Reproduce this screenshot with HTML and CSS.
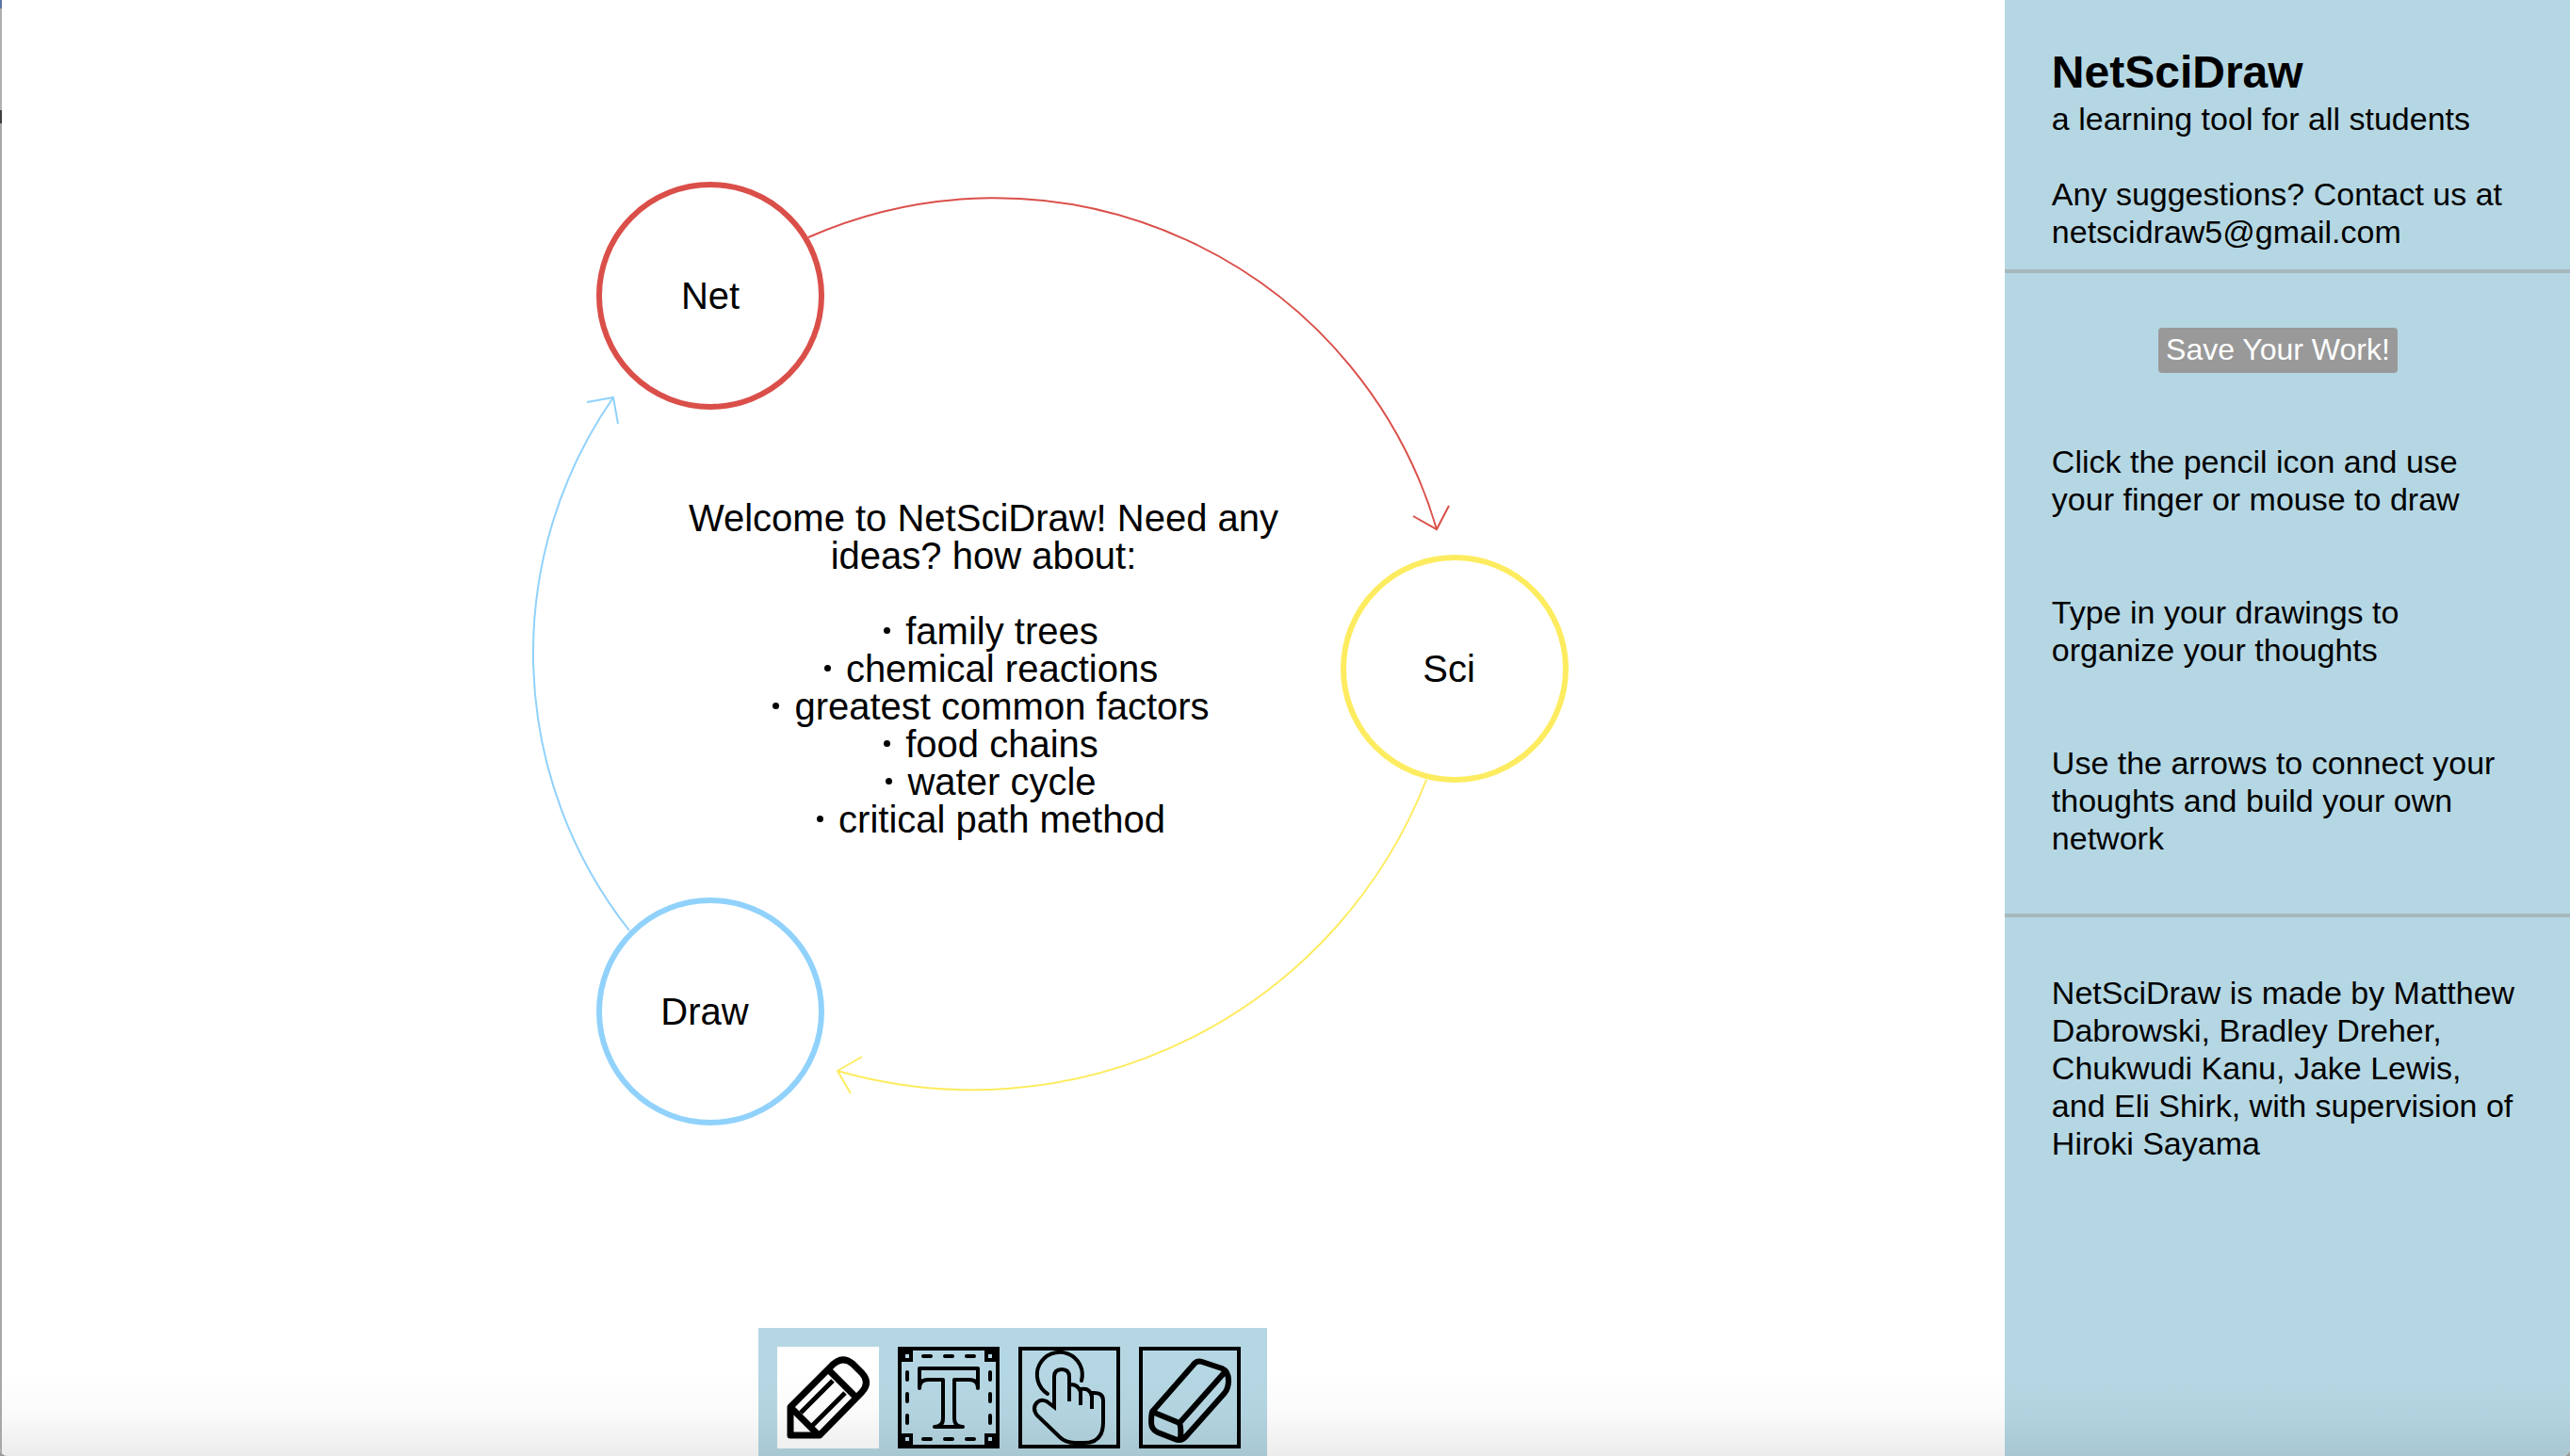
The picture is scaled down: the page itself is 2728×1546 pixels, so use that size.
FILE: index.html
```html
<!DOCTYPE html>
<html lang="en">
<head>
<meta charset="utf-8">
<title>NetSciDraw</title>
<link rel="stylesheet" href="styles.css">
</head>
<body>
<div class="app">
  <main class="workspace">
    <div class="board">
      <svg class="drawing" width="1700" height="1240" viewBox="0 0 1700 1240" role="img" aria-label="Net leads to Sci, Sci leads to Draw, Draw leads to Net">
        <g class="node net"><circle cx="754" cy="314" r="118"/></g>
        <g class="node sci"><circle cx="1544" cy="710" r="118"/></g>
        <g class="node draw"><circle cx="754" cy="1074" r="118"/></g>
        <g class="link net"><path d="M858 252A489 489 0 0 1 1525 562"/><path d="M1500 548L1525 562L1538 537"/></g>
        <g class="link sci"><path d="M1514 828A517 517 0 0 1 889 1137"/><path d="M915 1122L889 1137L903 1161"/></g>
        <g class="link draw"><path d="M668 988A476 476 0 0 1 651 422"/><path d="M623 427L651 422L656 450"/></g>
        <text class="label" x="754" y="328">Net</text>
        <text class="label" x="1538" y="724">Sci</text>
        <text class="label" x="748" y="1088">Draw</text>
      </svg>
      <div class="welcome">
        <p>Welcome to NetSciDraw! Need any ideas? how about:</p>
        <ul class="ideas">
          <li>family trees</li>
          <li>chemical reactions</li>
          <li>greatest common factors</li>
          <li>food chains</li>
          <li>water cycle</li>
          <li>critical path method</li>
        </ul>
      </div>
    </div>
    <div class="toolbar" role="toolbar" aria-label="Drawing tools">
      <button class="tool selected" type="button" aria-label="Pencil">
        <svg viewBox="0 0 108 108" fill="none" stroke="#000" stroke-width="7" stroke-linejoin="round">
          <path d="M14 64L56 22Q68 8 80 18L90 28Q99 38 90 48L45 94H14Z"/>
          <path d="M54 24L83 53M14 64L44 94"/>
          <path d="M59 36L25 70M72 49L37 84" stroke-width="5"/>
        </svg>
      </button>
      <button class="tool" type="button" aria-label="Text">
        <svg viewBox="0 0 108 108" fill="none" stroke="#000" stroke-width="4">
          <rect x="2" y="2" width="104" height="104"/>
          <path d="M6 6h8v8h-8zM94 6h8v8h-8zM6 94h8v8h-8zM94 94h8v8h-8z"/>
          <path d="M27 10h8M50 10h8M73 10h8M27 98h8M50 98h8M73 98h8M10 27v8M10 50v8M10 73v8M98 27v8M98 50v8M98 73v8" stroke-linecap="round"/>
          <path d="M23 44V23H85V44Q85 35 76 35H60V76Q60 85 69 85H39Q48 85 48 76V35H32Q23 35 23 44Z" stroke-linecap="round" stroke-linejoin="round"/>
        </svg>
      </button>
      <button class="tool" type="button" aria-label="Move">
        <svg viewBox="0 0 108 108" fill="none" stroke="#000" stroke-width="4">
          <rect x="2" y="2" width="104" height="104"/>
          <path d="M31 50A24 24 0 1 1 67 36" stroke-linecap="round"/>
          <path d="M54 58V32Q54 24 46 24Q38 24 38 32V64L30 58Q24 55 20 59Q14 65 20 73L44 96Q50 102 60 102H70Q90 102 90 80V57Q90 48 78 49V66V53Q76 43 66 45V62V48Q63 39 54 40"/>
        </svg>
      </button>
      <button class="tool" type="button" aria-label="Eraser">
        <svg viewBox="0 0 108 108" fill="none" stroke="#000" stroke-width="6" stroke-linejoin="round">
          <rect x="2" y="2" width="104" height="104" stroke-width="4" stroke-linejoin="miter"/>
          <path d="M14 69L57 20Q61 14 67 16L88 23Q95 26 95 36Q95 44 91 49L50 95Q45 101 38 98L20 91Q13 88 13 80Q13 73 14 69L43 81L91 27M43 81Q45 86 44 98"/>
        </svg>
      </button>
    </div>
  </main>
  <aside class="sidebar">
    <header class="panel intro">
      <h1>NetSciDraw</h1>
      <p>a learning tool for all students</p>
      <p class="contact">Any suggestions? Contact us at netscidraw5@gmail.com</p>
    </header>
    <section class="panel help">
      <button class="save" type="button">Save Your Work!</button>
      <p>Click the pencil icon and use your finger or mouse to draw</p>
      <p>Type in your drawings to organize your thoughts</p>
      <p>Use the arrows to connect your thoughts and build your own network</p>
    </section>
    <footer class="panel credits">
      <p>NetSciDraw is made by Matthew Dabrowski, Bradley Dreher, Chukwudi Kanu, Jake Lewis, and Eli Shirk, with supervision of Hiroki Sayama</p>
    </footer>
  </aside>
  <div class="shade"></div>
  <div class="edge"></div>
</div>
</body>
</html>
```
FILE: styles.css
```css
* {
  box-sizing: border-box;
}

body,
h1,
p,
ul {
  margin: 0;
  padding: 0;
}

body {
  background: #999;
  color: #000;
  font-family: "Liberation Sans", Arial, Helvetica, sans-serif;
  font-size: 34px;
  line-height: 40px;
}

button {
  font: inherit;
}

.app {
  position: relative;
  display: flex;
  min-height: 100vh;
  overflow: hidden;
  border-radius: 0 0 8px 8px;
  background: #fff;
}

.workspace {
  flex: 1;
  min-width: 0;
  display: flex;
  flex-direction: column;
}

/* The board is a free canvas: drawings and notes sit at their own coordinates. */
.board {
  position: relative;
  flex: 1;
}

.drawing {
  display: block;
}

.node {
  fill: none;
  stroke-width: 6px;
}

.link {
  fill: none;
  stroke-width: 2px;
}

.net {
  stroke: #da4f49;
}

.sci {
  stroke: #fdec60;
}

.draw {
  stroke: #90d2fb;
}

.label {
  font-size: 40px;
  text-anchor: middle;
}

.welcome {
  position: absolute;
  top: 530px;
  left: 714px;
  width: 660px;
  font-size: 40px;
  text-align: center;
}

.ideas {
  margin-top: 40px;
  list-style: none;
}

.ideas li::before {
  content: "";
  display: inline-block;
  width: 7px;
  height: 7px;
  margin: 0 16px;
  border-radius: 50%;
  background: #000;
  vertical-align: 11px;
}

.toolbar {
  align-self: center;
  display: flex;
  gap: 20px;
  margin-left: 22px;
  padding: 20px 28px 8px 20px;
  background: #b5d7e3;
}

.tool {
  width: 108px;
  height: 108px;
  padding: 0;
  border: 0;
  background: none;
}

.tool.selected {
  background: #fff;
}

.tool svg {
  display: block;
  width: 100%;
  height: 100%;
}

.sidebar {
  width: 22%;
  background: #b5d7e3;
}

.panel {
  padding: 0 50px;
}

.intro {
  padding-top: 52px;
  padding-bottom: 20px;
  border-bottom: 4px solid #a6b8be;
}

.intro h1 {
  margin-bottom: 4px;
  font-size: 48px;
  line-height: 50px;
}

.contact {
  margin-top: 40px;
}

.help {
  display: flex;
  flex-direction: column;
  padding-top: 58px;
  padding-bottom: 60px;
  border-bottom: 4px solid #a6b8be;
}

.help p + p {
  margin-top: 80px;
}

.save {
  align-self: center;
  height: 48px;
  margin-right: 20px;
  margin-bottom: 74px;
  padding: 0 8px 2px;
  border: 0;
  border-radius: 4px;
  background: #999;
  color: #fff;
  font-size: 32px;
}

.credits {
  padding-top: 60px;
}

/* Soft shadow along the bottom edge of the window. */
.shade {
  position: absolute;
  inset: auto 0 0;
  height: 90px;
  background: linear-gradient(rgba(0, 0, 0, 0), rgba(0, 0, 0, 0.02) 50%, rgba(0, 0, 0, 0.075));
  pointer-events: none;
}

/* Sliver of the desktop behind the left side of the window. */
.edge {
  position: absolute;
  inset: 0 auto 0 0;
  width: 2px;
  background: linear-gradient(#5a76a8 9px, #b0b0b0 9px, #b0b0b0 117px, #404040 117px, #404040 131px, #a8a8a8 131px);
}
```
